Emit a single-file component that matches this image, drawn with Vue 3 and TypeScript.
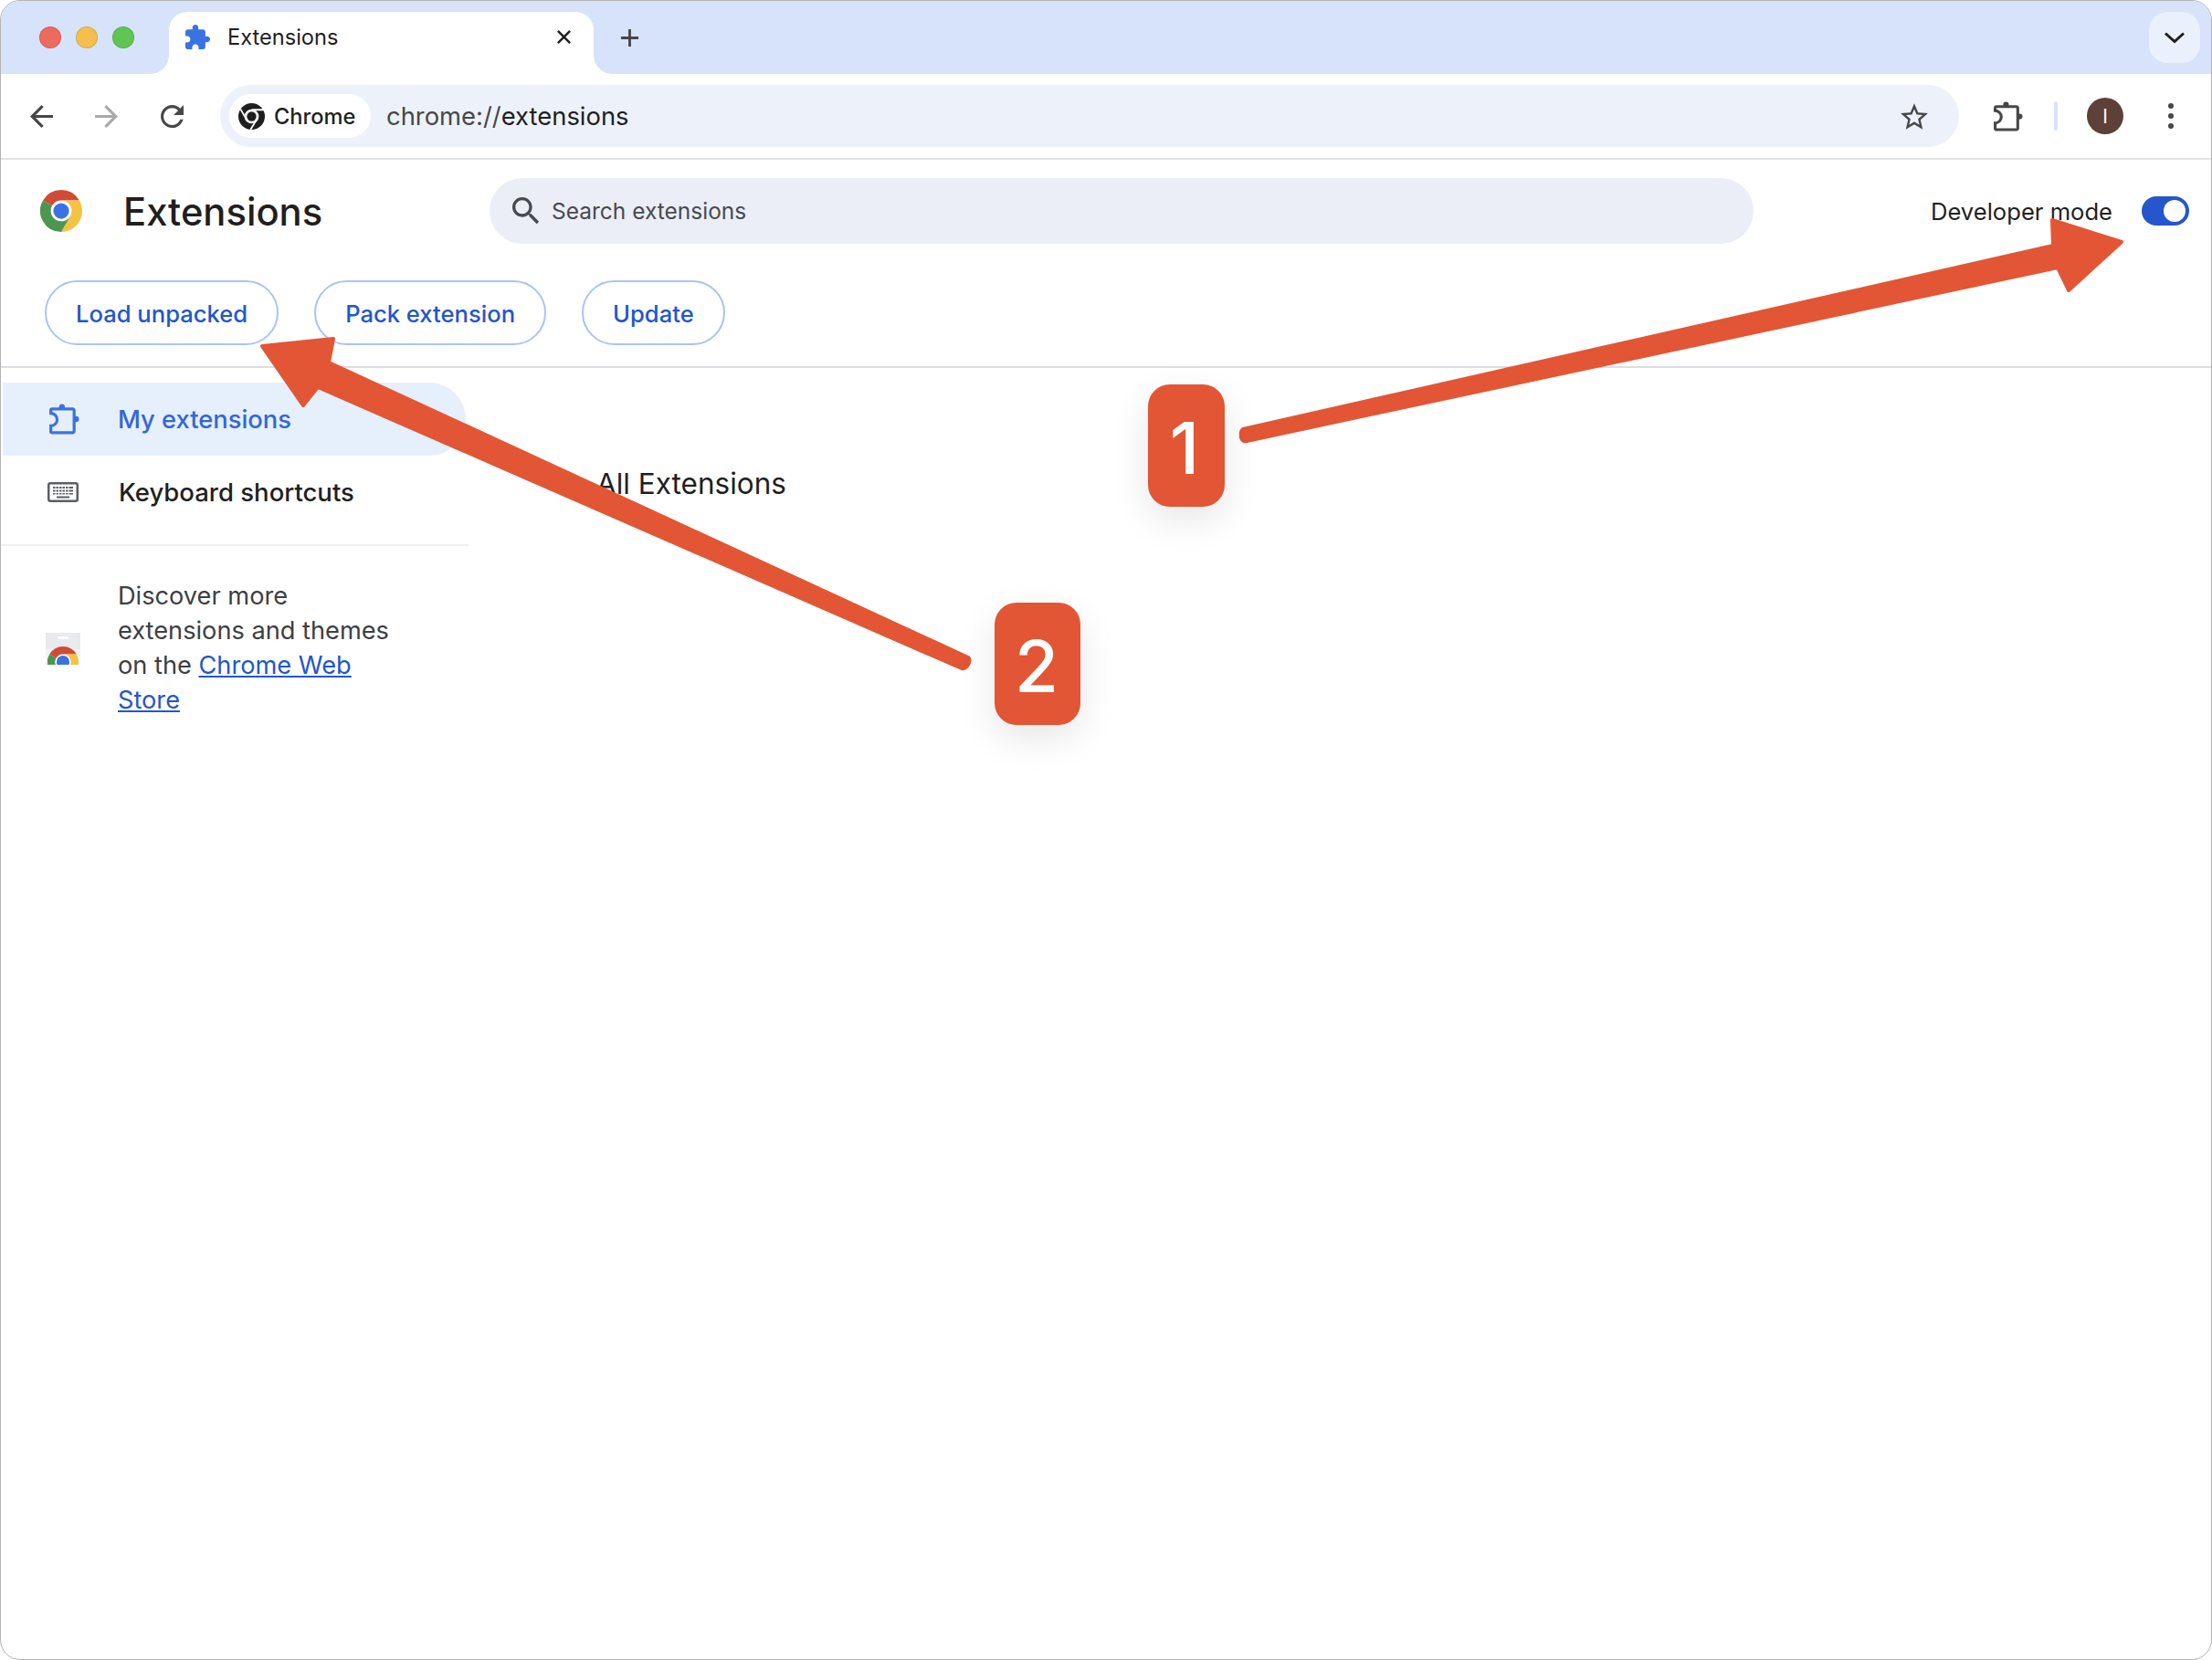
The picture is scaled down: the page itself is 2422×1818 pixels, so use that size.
<script setup lang="ts">
const actions: string[] = ['Load unpacked', 'Pack extension', 'Update'];
</script>

<template>
  <div class="window">
    <div class="strip">
      <div class="lights">
        <span class="light red"></span>
        <span class="light yellow"></span>
        <span class="light green"></span>
      </div>
      <div class="tab">
        <svg class="tab-icon" viewBox="2 1 21 21"><path fill="#3a72e2" d="M20.5 11H19V7c0-1.1-.9-2-2-2h-4V3.5C13 2.12 11.88 1 10.5 1S8 2.12 8 3.5V5H4c-1.1 0-1.99.9-1.99 2v3.8H3.5c1.49 0 2.7 1.21 2.7 2.7s-1.21 2.7-2.7 2.7H2V20c0 1.1.9 2 2 2h3.8v-1.5c0-1.49 1.21-2.7 2.7-2.7 1.49 0 2.7 1.21 2.7 2.7V22H17c1.1 0 2-.9 2-2v-4h1.5c1.38 0 2.5-1.12 2.5-2.5S21.88 11 20.5 11z"/></svg>
        <span class="tab-title">Extensions</span>
        <svg class="tab-close" viewBox="0 0 18 18"><path d="M2 2l14 14M16 2L2 16" stroke="#1f1f1f" stroke-width="2.6" fill="none"/></svg>
      </div>
      <svg class="plus" viewBox="0 0 22 22"><path d="M11 1v20M1 11h20" stroke="#474747" stroke-width="3" fill="none"/></svg>
      <div class="tab-search">
        <svg viewBox="0 0 24 14" width="24" height="14"><path d="M2 2.500l10 9 10-9" stroke="#1f1f1f" stroke-width="3" fill="none"/></svg>
      </div>
    </div>

    <div class="toolbar">
      <svg class="nav-ic" viewBox="4 4 16 16"><path fill="#474747" d="M20 11H7.830l5.590-5.590L12 4l-8 8 8 8 1.410-1.410L7.830 13H20v-2z"/></svg>
      <svg class="nav-ic fwd" viewBox="4 4 16 16"><path fill="#a9a9a9" d="M4 11h12.170l-5.590-5.590L12 4l8 8-8 8-1.410-1.410L16.170 13H4v-2z"/></svg>
      <svg class="nav-ic reload" viewBox="4 4 16 16"><path fill="#474747" d="M17.650 6.350C16.200 4.900 14.210 4 12 4c-4.420 0-7.990 3.580-7.990 8s3.570 8 7.990 8c3.730 0 6.840-2.550 7.730-6h-2.080c-.820 2.330-3.040 4-5.650 4-3.310 0-6-2.690-6-6s2.690-6 6-6c1.660 0 3.140.690 4.220 1.780L13 11h7V4l-2.350 2.350z"/></svg>
      <div class="omnibox">
        <div class="chip">
          <svg class="chip-logo" viewBox="0 0 48 48">
            <circle cx="24" cy="24" r="24" fill="#1f1f1f"/>
            <path d="M24 12H46M15 30L4 11M33 30L22 48" stroke="#fff" stroke-width="3" fill="none"/>
            <circle cx="24" cy="24" r="13" fill="#fff"/>
            <circle cx="24" cy="24" r="8.500" fill="#1f1f1f"/>
          </svg>
          <span>Chrome</span>
        </div>
        <span class="url"><span class="url-dim">chrome://</span>extensions</span>
        <svg class="star" viewBox="2 2 20 19"><path fill="#474747" d="M22 9.240l-7.190-.620L12 2 9.190 8.630 2 9.240l5.460 4.730L5.820 21 12 17.270 18.180 21l-1.630-7.030L22 9.240zM12 15.400l-3.760 2.270 1-4.280-3.320-2.880 4.380-.380L12 6.100l1.710 4.040 4.380.380-3.320 2.880 1 4.280L12 15.400z"/></svg>
      </div>
      <svg class="puzzle" viewBox="0 0 32 32">
        <circle cx="14" cy="3.500" r="3" fill="#474747"/>
        <circle cx="28.500" cy="16" r="3" fill="#474747"/>
        <path d="M4 5.500h21a1.500 1.500 0 0 1 1.500 1.500v21.500a1.500 1.500 0 0 1-1.500 1.500H4a1.500 1.500 0 0 1-1.500-1.500V23a6.500 6.500 0 0 0 0-13V7A1.500 1.500 0 0 1 4 5.500z" fill="none" stroke="#474747" stroke-width="3"/>
      </svg>
      <span class="sep"></span>
      <span class="avatar">I</span>
      <span class="dots"><i></i><i></i><i></i></span>
    </div>

    <div class="header">
      <div class="brand">
        <svg class="logo" viewBox="0 0 48 48">
          <path fill="#d04a36" d="M24 0A24 24 0 0 1 44.780 12H24a12 12 0 0 0-10.390 6L3.200 12A24 24 0 0 1 24 0z"/>
          <path fill="#f5c344" d="M44.780 12A24 24 0 0 1 24 48L34.390 30A12 12 0 0 0 24 12z"/>
          <path fill="#4c9650" d="M3.200 12A24 24 0 0 0 24 48L34.390 30A12 12 0 0 1 13.610 18z"/>
          <circle cx="24" cy="24" r="11.500" fill="#fff"/>
          <circle cx="24" cy="24" r="9" fill="#3a72e2"/>
        </svg>
        <h1>Extensions</h1>
      </div>
      <div class="search">
        <svg viewBox="3 3 18 18"><path fill="#474a4f" d="M15.500 14h-.790l-.280-.270C15.410 12.590 16 11.110 16 9.500 16 5.910 13.090 3 9.500 3S3 5.910 3 9.500 5.910 16 9.500 16c1.610 0 3.090-.590 4.230-1.570l.270.280v.790l5 4.990L20.490 19l-4.990-5zm-6 0C7.010 14 5 11.990 5 9.500S7.010 5 9.500 5 14 7.010 14 9.500 11.990 14 9.500 14z"/></svg>
        <span>Search extensions</span>
      </div>
      <div class="devmode">
        <span>Developer mode</span>
        <span class="toggle"><i></i></span>
      </div>
    </div>

    <div class="actions">
      <button v-for="label in actions" :key="label" class="pill">{{ label }}</button>
    </div>

    <div class="body">
      <aside class="side">
        <div class="nav-item active">
          <svg class="side-puzzle" viewBox="0 0 32 32">
            <circle cx="14" cy="3.500" r="3" fill="#3a72e2"/>
            <circle cx="28.500" cy="16" r="3" fill="#3a72e2"/>
            <path d="M4 5.500h21a1.500 1.500 0 0 1 1.500 1.500v21.500a1.500 1.500 0 0 1-1.500 1.500H4a1.500 1.500 0 0 1-1.500-1.500V23a6.500 6.500 0 0 0 0-13V7A1.500 1.500 0 0 1 4 5.500z" fill="none" stroke="#3a72e2" stroke-width="3"/>
          </svg>
          <span>My extensions</span>
        </div>
        <div class="nav-item plain">
          <svg class="kbd" viewBox="0 0 34 22">
            <rect x="1.250" y="1.250" width="31.500" height="19.500" rx="2" fill="none" stroke="#5a5e66" stroke-width="2.500"/>
            <path d="M6 5h22v2H6zM6 8.500h22v2H6zM6 12h22v1.500H6z" fill="#5a5e66"/>
            <path d="M9 5v9M12.500 5v9M16 5v9M19.500 5v9M23 5v9" stroke="#fff" stroke-width="1" fill="none"/>
            <path d="M10 15.500h14v2H10z" fill="#5a5e66"/>
          </svg>
          <span>Keyboard shortcuts</span>
        </div>
        <div class="rule"></div>
        <div class="promo">
          <svg class="shop" viewBox="0 0 38 35">
            <rect x="0" y="0" width="38" height="18" fill="#e8eaed"/>
            <rect x="0" y="18" width="38" height="17" fill="#f1f3f4"/>
            <rect x="13" y="4" width="12" height="3" rx="1.500" fill="#fff"/>
            <svg x="2" y="15" width="34" height="20" viewBox="0 0 48 28" overflow="hidden">
              <path fill="#d04a36" d="M24 0A24 24 0 0 1 44.780 12H24a12 12 0 0 0-10.390 6L3.200 12A24 24 0 0 1 24 0z"/>
              <path fill="#f5c344" d="M44.780 12A24 24 0 0 1 24 48L34.390 30A12 12 0 0 0 24 12z"/>
              <path fill="#4c9650" d="M3.200 12A24 24 0 0 0 24 48L34.390 30A12 12 0 0 1 13.610 18z"/>
              <circle cx="24" cy="24" r="12" fill="#fff"/>
              <circle cx="24" cy="24" r="10" fill="#3a72e2"/>
            </svg>
          </svg>
          <p>Discover more extensions and themes on the <a href="#">Chrome Web Store</a></p>
        </div>
      </aside>
      <main class="main">
        <h2>All Extensions</h2>
      </main>
    </div>

    <svg class="arrows" viewBox="0 0 2422 1818" width="2422" height="1818">
      <path class="arrow" d="M1361 470L2248 269L2247 241L2323 265L2265 318L2253 293L1365 483Q1360 484 1359 479Q1358 472 1361 470Z"/>
      <path class="arrow" d="M1060 720L360 397L365 371L287 379L332 444L348 424L1053 732Q1057 733 1060 728Q1063 722 1060 720Z"/>
    </svg>
    <div class="badge one">1</div>
    <div class="badge two">2</div>
  </div>
</template>

<style>
html, body { margin: 0; background: #fff; }
</style>

<style scoped>
.window {
  position: relative;
  width: 2422px;
  height: 1818px;
  box-sizing: border-box;
  border: 1px solid #b4b4b4;
  border-radius: 22px;
  overflow: hidden;
  background: #fff;
  font-family: Inter, "Liberation Sans", sans-serif;
  color: #1f1f1f;
  display: flex;
  flex-direction: column;
}
.strip {
  height: 80px;
  flex: none;
  background: #d6e3fb;
  display: flex;
  align-items: flex-start;
  padding-top: 12px;
  box-sizing: border-box;
}
.lights {
  display: flex;
  gap: 16px;
  margin: 16px 38px 0 42px;
}
.light {
  width: 24px;
  height: 24px;
  border-radius: 50%;
  box-sizing: border-box;
  border: 1px solid rgba(0, 0, 0, 0.12);
}
.red { background: #ef6a5e; }
.yellow { background: #f5bf4f; }
.green { background: #61c554; }
.tab {
  position: relative;
  width: 465px;
  height: 68px;
  background: #fff;
  border-radius: 20px 20px 0 0;
  display: flex;
  align-items: center;
  box-sizing: border-box;
  padding: 0 24px 13px 18px;
}
.tab::before,
.tab::after {
  content: "";
  position: absolute;
  bottom: 0;
  width: 20px;
  height: 20px;
}
.tab::before {
  left: -20px;
  background: radial-gradient(circle at 0 0, #d6e3fb 19.5px, #fff 20px);
}
.tab::after {
  right: -20px;
  background: radial-gradient(circle at 100% 0, #d6e3fb 19.5px, #fff 20px);
}
.tab-icon { width: 27px; height: 27px; flex: none; }
.tab-title { font-size: 23.6px; margin-left: 19px; flex: 1; }
.tab-close { width: 17px; height: 17px; }
.plus { width: 21px; height: 21px; margin: 18px 0 0 29px; }
.tab-search {
  margin-left: auto;
  margin-right: 12px;
  width: 56px;
  height: 56px;
  background: #eaf1fd;
  border-radius: 20px;
  display: flex;
  align-items: center;
  justify-content: center;
}
.toolbar {
  height: 94px;
  flex: none;
  box-sizing: border-box;
  background: #fff;
  border-radius: 20px 20px 0 0;
  border-bottom: 2px solid #e3e3e3;
  display: flex;
  align-items: center;
  padding: 0 0 0 32px;
  position: relative;
}
.nav-ic { width: 25px; height: 25px; flex: none; margin-right: 46px; }
.nav-ic.fwd { margin-right: 47px; }
.nav-ic.reload { margin-right: 40px; }
.omnibox {
  width: 1904px;
  height: 68px;
  border-radius: 34px;
  background: #edf2fa;
  display: flex;
  align-items: center;
  box-sizing: border-box;
  padding: 0 22px 0 10px;
  flex: none;
}
.chip {
  height: 48px;
  width: 155px;
  background: #fff;
  border-radius: 24px;
  display: flex;
  align-items: center;
  box-sizing: border-box;
  padding-left: 10px;
  font-size: 23.6px;
  font-weight: 500;
  flex: none;
}
.chip-logo { width: 29px; height: 29px; margin-right: 10px; }
.url { font-size: 27.4px; margin-left: 17px; flex: 1; }
.url-dim { color: #474747; }
.star { width: 30px; height: 29px; margin-right: 12px; flex: none; }
.puzzle { width: 33px; height: 33px; margin-left: 37px; flex: none; }
.sep {
  width: 4px;
  height: 32px;
  background: #d6e3fb;
  border-radius: 2px;
  margin-left: 34px;
  flex: none;
}
.avatar {
  width: 40px;
  height: 40px;
  border-radius: 50%;
  background: #5d4037;
  color: #fff;
  display: flex;
  align-items: center;
  justify-content: center;
  font-size: 21px;
  margin-left: 32px;
  flex: none;
}
.dots {
  display: flex;
  flex-direction: column;
  gap: 5px;
  margin-left: 49px;
  flex: none;
}
.dots i {
  width: 6px;
  height: 6px;
  border-radius: 50%;
  background: #474747;
}
.header {
  height: 112px;
  flex: none;
  display: flex;
  align-items: center;
  padding-left: 43px;
  padding-right: 24px;
}
.brand {
  display: flex;
  align-items: center;
  width: 492px;
  flex: none;
}
.logo { width: 46px; height: 46px; flex: none; margin-right: 45px; }
h1 { font-size: 41.7px; font-weight: 500; margin: 3px 0 0; line-height: 1; }
.search {
  width: 1384px;
  height: 72px;
  border-radius: 36px;
  background: #ebeef6;
  display: flex;
  align-items: center;
  box-sizing: border-box;
  padding-left: 25px;
  font-size: 24.5px;
  color: #474a4f;
  flex: none;
}
.search svg { width: 30px; height: 30px; margin-right: 13px; }
.devmode {
  margin-left: auto;
  display: flex;
  align-items: center;
  font-size: 25.6px;
  gap: 32px;
}
.toggle {
  width: 52px;
  height: 32px;
  border-radius: 16px;
  background: #2656cc;
  display: flex;
  align-items: center;
  justify-content: flex-end;
  padding-right: 4px;
  box-sizing: border-box;
}
.toggle i {
  width: 24px;
  height: 24px;
  border-radius: 50%;
  background: #fff;
}
.actions {
  flex: none;
  display: flex;
  gap: 39px;
  padding: 20px 0 23px 48px;
  border-bottom: 2px solid #dcdce4;
}
.pill {
  height: 71px;
  box-sizing: border-box;
  padding: 2px 32px 0;
  border: 2px solid #a8c4f5;
  border-radius: 36px;
  background: #fff;
  color: #2256cc;
  font-family: inherit;
  font-size: 25.6px;
  font-weight: 500;
}
.body { flex: 1; display: flex; }
.side {
  width: 512px;
  flex: none;
  padding-top: 16px;
}
.nav-item {
  height: 80px;
  width: 507px;
  margin-left: 2px;
  display: flex;
  align-items: center;
  font-size: 27.3px;
  font-weight: 500;
  border-radius: 0 40px 40px 0;
  box-sizing: border-box;
  padding-left: 50px;
}
.nav-item svg { flex: none; }
.nav-item.active { background: #e6effc; color: #3367d6; }
.nav-item.plain { padding-left: 49px; font-size: 27.5px; }
.side-puzzle { width: 34px; height: 34px; margin-right: 42px; }
.kbd { width: 34px; height: 22px; margin-right: 44px; }
.rule { height: 2px; background: #f0f0f0; margin-top: 17px; }
.promo {
  display: flex;
  align-items: center;
  padding: 36px 0 0 49px;
}
.shop { width: 38px; height: 35px; flex: none; margin-right: 41px; }
.promo p {
  margin: 0;
  width: 320px;
  font-size: 27.2px;
  line-height: 38px;
  color: #3c4043;
}
.promo a { color: #2256cc; text-decoration: underline; }
.main { flex: 1; padding: 108px 0 0 140px; }
h2 { font-size: 31.5px; line-height: 38px; font-weight: 400; margin: 0; }
.arrows { position: absolute; left: -1px; top: -1px; pointer-events: none; }
.arrow { fill: #e25635; stroke: #e25635; stroke-width: 4; stroke-linejoin: round; }
.badge {
  position: absolute;
  background: #e25635;
  color: #fff;
  border-radius: 24px;
  height: 134px;
  display: flex;
  align-items: center;
  justify-content: center;
  box-sizing: border-box;
  padding: 4px 4px 0 0;
  font-size: 78px;
  font-weight: 500;
  box-shadow: 0 14px 40px rgba(0, 0, 0, 0.1);
}
.one { left: 1256px; top: 420px; width: 84px; }
.two { left: 1088px; top: 659px; width: 94px; padding-right: 2px; }
</style>
